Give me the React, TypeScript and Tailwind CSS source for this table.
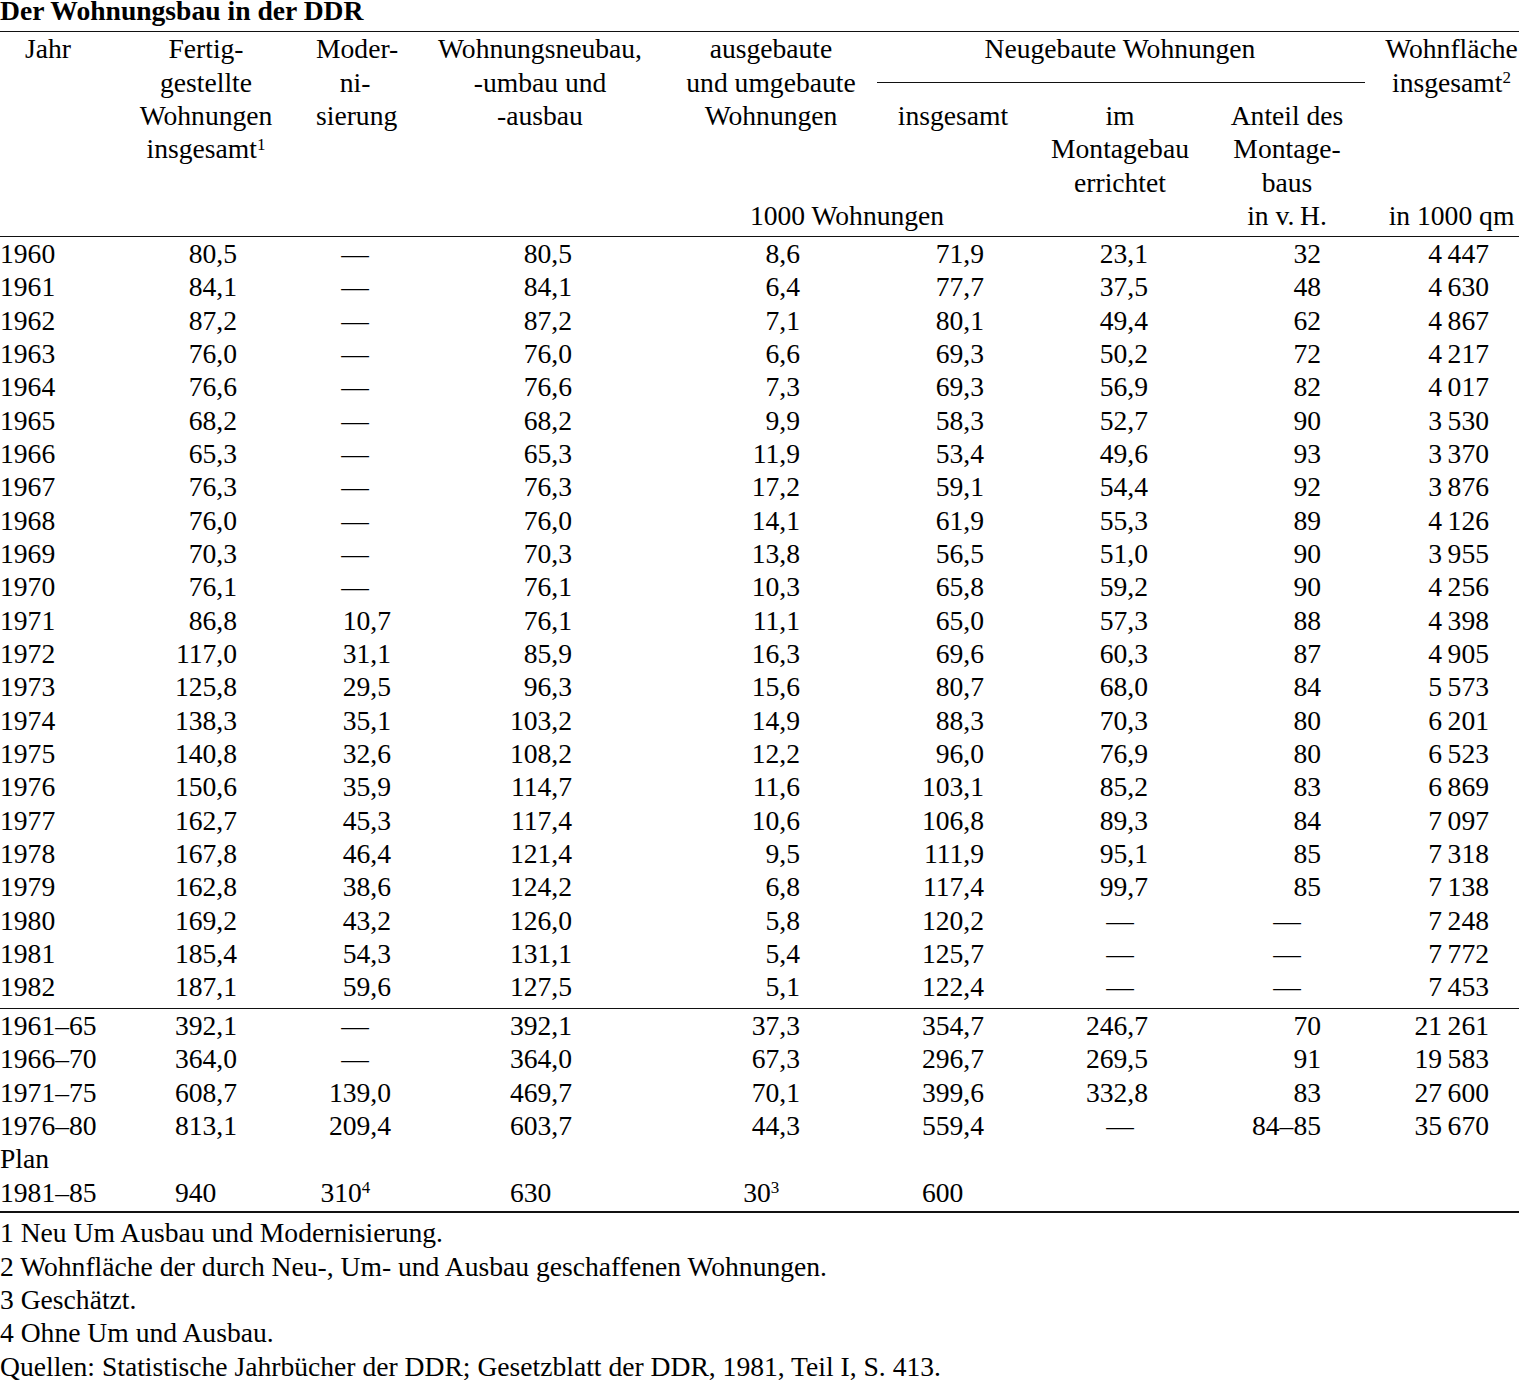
const GRID = 'grid grid-cols-[96px_220px_78px_292px_170px_194px_140px_194px_1fr]';

type Row = [string, ...string[]];

const yearly: Row[] = [
  ['1960', '80,5', '—', '80,5', '8,6', '71,9', '23,1', '32', '4\u2009447'],
  ['1961', '84,1', '—', '84,1', '6,4', '77,7', '37,5', '48', '4\u2009630'],
  ['1962', '87,2', '—', '87,2', '7,1', '80,1', '49,4', '62', '4\u2009867'],
  ['1963', '76,0', '—', '76,0', '6,6', '69,3', '50,2', '72', '4\u2009217'],
  ['1964', '76,6', '—', '76,6', '7,3', '69,3', '56,9', '82', '4\u2009017'],
  ['1965', '68,2', '—', '68,2', '9,9', '58,3', '52,7', '90', '3\u2009530'],
  ['1966', '65,3', '—', '65,3', '11,9', '53,4', '49,6', '93', '3\u2009370'],
  ['1967', '76,3', '—', '76,3', '17,2', '59,1', '54,4', '92', '3\u2009876'],
  ['1968', '76,0', '—', '76,0', '14,1', '61,9', '55,3', '89', '4\u2009126'],
  ['1969', '70,3', '—', '70,3', '13,8', '56,5', '51,0', '90', '3\u2009955'],
  ['1970', '76,1', '—', '76,1', '10,3', '65,8', '59,2', '90', '4\u2009256'],
  ['1971', '86,8', '10,7', '76,1', '11,1', '65,0', '57,3', '88', '4\u2009398'],
  ['1972', '117,0', '31,1', '85,9', '16,3', '69,6', '60,3', '87', '4\u2009905'],
  ['1973', '125,8', '29,5', '96,3', '15,6', '80,7', '68,0', '84', '5\u2009573'],
  ['1974', '138,3', '35,1', '103,2', '14,9', '88,3', '70,3', '80', '6\u2009201'],
  ['1975', '140,8', '32,6', '108,2', '12,2', '96,0', '76,9', '80', '6\u2009523'],
  ['1976', '150,6', '35,9', '114,7', '11,6', '103,1', '85,2', '83', '6\u2009869'],
  ['1977', '162,7', '45,3', '117,4', '10,6', '106,8', '89,3', '84', '7\u2009097'],
  ['1978', '167,8', '46,4', '121,4', '9,5', '111,9', '95,1', '85', '7\u2009318'],
  ['1979', '162,8', '38,6', '124,2', '6,8', '117,4', '99,7', '85', '7\u2009138'],
  ['1980', '169,2', '43,2', '126,0', '5,8', '120,2', '—', '—', '7\u2009248'],
  ['1981', '185,4', '54,3', '131,1', '5,4', '125,7', '—', '—', '7\u2009772'],
  ['1982', '187,1', '59,6', '127,5', '5,1', '122,4', '—', '—', '7\u2009453'],
];

const periods: Row[] = [
  ['1961–65', '392,1', '—', '392,1', '37,3', '354,7', '246,7', '70', '21\u2009261'],
  ['1966–70', '364,0', '—', '364,0', '67,3', '296,7', '269,5', '91', '19\u2009583'],
  ['1971–75', '608,7', '139,0', '469,7', '70,1', '399,6', '332,8', '83', '27\u2009600'],
  ['1976–80', '813,1', '209,4', '603,7', '44,3', '559,4', '—', '84–85', '35\u2009670'],
];

// right padding per value column, decimal columns get aligned on the comma
const valueCols = [
  { pr: 'pr-[79px]', decimal: true },
  { pr: 'pr-[3px]', decimal: true },
  { pr: 'pr-[114px]', decimal: true },
  { pr: 'pr-[56px]', decimal: true },
  { pr: 'pr-[66px]', decimal: true },
  { pr: 'pr-[42px]', decimal: true },
  { pr: 'pr-[63px]', decimal: false },
  { pr: 'pr-[30px]', decimal: false },
];

const Cell = ({ value, col, sup }: { value: string; col: number; sup?: string }) => {
  const cfg = valueCols[col];
  if (value === '') return <div />;
  if (value === '—') return <div className="text-center">—</div>;
  const pad = cfg.decimal && !value.includes(',');
  return (
    <div className={`text-right whitespace-nowrap ${cfg.pr}`}>
      {value}
      {sup ? <sup className="text-[17px]">{sup}</sup> : null}
      {pad ? <span className="invisible">,0</span> : null}
    </div>
  );
};

const DataRow = ({ row }: { row: Row }) => (
  <div className={GRID}>
    <div className="whitespace-nowrap">{row[0]}</div>
    {row.slice(1).map((v, i) => (
      <Cell key={i} value={v} col={i} />
    ))}
  </div>
);

const Rule = ({ className }: { className: string }) => <div className={`w-full bg-[#111] ${className}`} />;

const Header = () => (
  <div className={`${GRID} grid-rows-[repeat(6,33.333px)] text-center`}>
    <div className="col-start-1 row-start-1">Jahr</div>
    <div className="col-start-2 row-start-1 row-span-4">
      Fertig-
      <br />
      gestellte
      <br />
      Wohnungen
      <br />
      insgesamt<sup className="text-[17px]">1</sup>
    </div>
    <div className="col-start-3 row-start-1 row-span-3">
      Moder-
      <br />
      ni-
      <br />
      sierung
    </div>
    <div className="col-start-4 row-start-1 row-span-3">
      Wohnungsneubau,
      <br />
      -umbau und
      <br />
      -ausbau
    </div>
    <div className="col-start-5 row-start-1 row-span-3 whitespace-nowrap">
      ausgebaute
      <br />
      und umgebaute
      <br />
      Wohnungen
    </div>
    <div className="col-start-6 col-span-3 row-start-1">Neugebaute Wohnungen</div>
    <div className="col-start-6 col-span-3 row-start-2 flex items-center pl-[21px] pr-[19px]">
      <div className="h-px w-full bg-[#111]" />
    </div>
    <div className="col-start-6 row-start-3">insgesamt</div>
    <div className="col-start-7 row-start-3 row-span-3 whitespace-nowrap">
      im
      <br />
      Montagebau
      <br />
      errichtet
    </div>
    <div className="col-start-8 row-start-3 row-span-4 whitespace-nowrap">
      Anteil des
      <br />
      Montage-
      <br />
      baus
      <br />
      in v.{'\u2009'}H.
    </div>
    <div className="col-start-9 row-start-1 row-span-2 whitespace-nowrap">
      Wohnfläche
      <br />
      insgesamt<sup className="text-[17px]">2</sup>
    </div>
    <div className="col-start-5 col-span-2 row-start-6 pr-[42px] whitespace-nowrap">1000 Wohnungen</div>
    <div className="col-start-9 row-start-6 whitespace-nowrap">in 1000 qm</div>
  </div>
);

export default function App() {
  return (
    <div className="w-[1519px] bg-white font-['Liberation_Serif','Times_New_Roman',serif] text-[27.6px] leading-[33.333px] text-black">
      <h1 className="text-[27.6px] font-bold leading-[22px]">Der Wohnungsbau in der DDR</h1>
      <Rule className="mt-[9px] h-[1.4px]" />
      <Header />
      <Rule className="mt-[3.6px] h-px" />
      <div>
        {yearly.map((r) => (
          <DataRow key={r[0]} row={r} />
        ))}
      </div>
      <Rule className="mt-[4.4px] h-px" />
      <div>
        {periods.map((r) => (
          <DataRow key={r[0]} row={r} />
        ))}
        <div className={GRID}>
          <div>Plan</div>
        </div>
        <div className={GRID}>
          <div className="whitespace-nowrap">1981–85</div>
          <Cell value="940" col={0} />
          <Cell value="310" col={1} sup="4" />
          <Cell value="630" col={2} />
          <Cell value="30" col={3} sup="3" />
          <Cell value="600" col={4} />
        </div>
      </div>
      <Rule className="mt-[2.5px] h-[1.4px]" />
      <div className="mt-[3.6px]">
        <p>1 Neu Um Ausbau und Modernisierung.</p>
        <p>2 Wohnfläche der durch Neu-, Um- und Ausbau geschaffenen Wohnungen.</p>
        <p>3 Geschätzt.</p>
        <p>4 Ohne Um und Ausbau.</p>
        <p>Quellen: Statistische Jahrbücher der DDR; Gesetzblatt der DDR, 1981, Teil I, S. 413.</p>
      </div>
    </div>
  );
}
